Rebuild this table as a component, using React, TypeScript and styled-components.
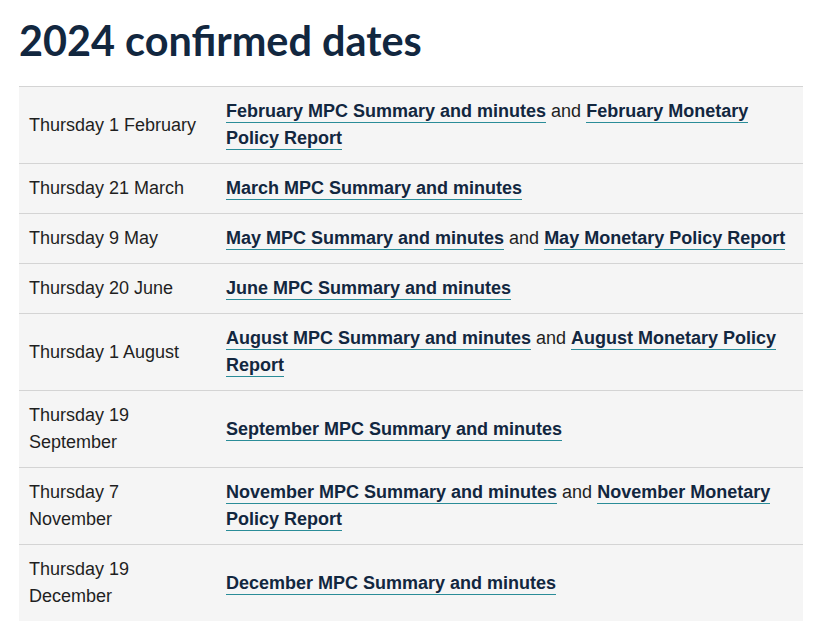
import React from "react";
import styled, { createGlobalStyle } from "styled-components";

const GlobalStyle = createGlobalStyle`
  html, body { margin: 0; padding: 0; background: #ffffff; }
  body { font-family: "Liberation Sans", Arial, sans-serif; }
`;

const Page = styled.main`
  padding: 14px 10px 0 19px;
`;

const Heading = styled.h2`
  font-family: Lato, "Noto Sans", sans-serif;
  font-weight: 700;
  font-size: 41.4px;
  line-height: 52px;
  color: #12273f;
  margin: 0 0 20px 0;
`;

const Table = styled.table`
  width: 784px;
  border-collapse: collapse;
  background: #f5f5f5;
  border-top: 1px solid #d4d4d4;
  font-family: "Liberation Sans", Arial, sans-serif;
`;

const Row = styled.tr`
  border-bottom: 1px solid #d4d4d4;
  &:last-child { border-bottom: none; }
`;

const DateCell = styled.td`
  width: 170px;
  padding: 11px 17px 11px 10px;
  font-family: "Liberation Sans", Arial, sans-serif;
  font-size: 18px;
  line-height: 27px;
  color: #1f1f1f;
  vertical-align: middle;
`;

const LinkCell = styled.td`
  padding: 11px 10px;
  font-family: "Liberation Sans", Arial, sans-serif;
  font-size: 18px;
  line-height: 27px;
  color: #1f1f1f;
  vertical-align: middle;
`;

const Link = styled.a`
  color: #12273f;
  font-weight: 700;
  text-decoration: none;
  border-bottom: 1px solid #2a8c98;
  padding-bottom: 1px;
`;

type Entry = { date: string; links: string[] };

const entries: Entry[] = [
  { date: "Thursday 1 February", links: ["February MPC Summary and minutes", "February Monetary Policy Report"] },
  { date: "Thursday 21 March", links: ["March MPC Summary and minutes"] },
  { date: "Thursday 9 May", links: ["May MPC Summary and minutes", "May Monetary Policy Report"] },
  { date: "Thursday 20 June", links: ["June MPC Summary and minutes"] },
  { date: "Thursday 1 August", links: ["August MPC Summary and minutes", "August Monetary Policy Report"] },
  { date: "Thursday 19 September", links: ["September MPC Summary and minutes"] },
  { date: "Thursday 7 November", links: ["November MPC Summary and minutes", "November Monetary Policy Report"] },
  { date: "Thursday 19 December", links: ["December MPC Summary and minutes"] },
];

export default function App() {
  return (
    <>
      <GlobalStyle />
      <Page>
        <Heading>2024 confirmed dates</Heading>
        <Table>
          <tbody>
            {entries.map((e) => (
              <Row key={e.date}>
                <DateCell>{e.date}</DateCell>
                <LinkCell>
                  <Link href="#">{e.links[0]}</Link>
                  {e.links[1] && (
                    <>
                      {" and "}
                      <Link href="#">{e.links[1]}</Link>
                    </>
                  )}
                </LinkCell>
              </Row>
            ))}
          </tbody>
        </Table>
      </Page>
    </>
  );
}
